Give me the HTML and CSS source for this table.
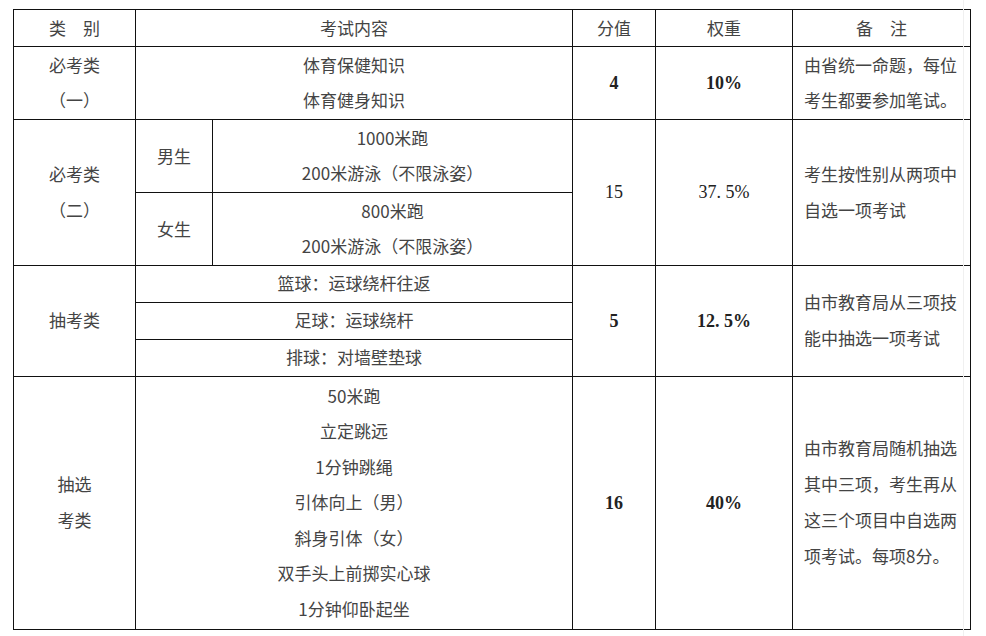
FILE: index.html
```html
<!DOCTYPE html>
<html lang="zh-CN">
<head>
<meta charset="utf-8">
<title>考试项目</title>
<link rel="stylesheet" href="styles.css">
</head>
<body>
<div class="page">
<table class="exam">
  <colgroup>
    <col class="c-cat">
    <col class="c-sex">
    <col class="c-item">
    <col class="c-score">
    <col class="c-weight">
    <col class="c-note">
  </colgroup>
  <tr class="r-head">
    <td>类　别</td>
    <td colspan="2">考试内容</td>
    <td>分值</td>
    <td>权重</td>
    <td>备　注</td>
  </tr>
  <tr class="r-1">
    <td>必考类<br>（一）</td>
    <td colspan="2">体育保健知识<br>体育健身知识</td>
    <td class="num b">4</td>
    <td class="num b">10%</td>
    <td class="note">由省统一命题，每位考生都要参加笔试。</td>
  </tr>
  <tr class="r-2">
    <td rowspan="2" class="span2">必考类<br>（二）</td>
    <td>男生</td>
    <td>1000米跑<br>200米游泳（不限泳姿）</td>
    <td rowspan="2" class="num">15</td>
    <td rowspan="2" class="num">37. 5%</td>
    <td rowspan="2" class="note">考生按性别从两项中自选一项考试</td>
  </tr>
  <tr class="r-2">
    <td>女生</td>
    <td>800米跑<br>200米游泳（不限泳姿）</td>
  </tr>
  <tr class="r-3">
    <td rowspan="3">抽考类</td>
    <td colspan="2">篮球：运球绕杆往返</td>
    <td rowspan="3" class="num b">5</td>
    <td rowspan="3" class="num b">12. 5%</td>
    <td rowspan="3" class="note">由市教育局从三项技能中抽选一项考试</td>
  </tr>
  <tr class="r-3">
    <td colspan="2">足球：运球绕杆</td>
  </tr>
  <tr class="r-3">
    <td colspan="2">排球：对墙壁垫球</td>
  </tr>
  <tr class="r-4">
    <td>抽选<br>考类</td>
    <td colspan="2" class="items">50米跑<br>立定跳远<br>1分钟跳绳<br>引体向上（男）<br>斜身引体（女）<br>双手头上前掷实心球<br>1分钟仰卧起坐</td>
    <td class="num b">16</td>
    <td class="num b">40%</td>
    <td class="note">由市教育局随机抽选其中三项，考生再从这三个项目中自选两项考试。每项8分。</td>
  </tr>
</table>
<div class="edge"></div>
</div>
</body>
</html>
```

FILE: styles.css
```css
html, body {
  margin: 0;
  padding: 0;
  background: #ffffff;
}

.page {
  position: relative;
  width: 986px;
  height: 636px;
  padding: 9px 0 0 13px;
  box-sizing: border-box;
}

.exam {
  border-collapse: collapse;
  table-layout: fixed;
  width: 957px;
  font-family: "Noto Sans CJK SC", "Noto Sans", sans-serif;
  font-size: 17px;
  color: #444;
}

.c-cat { width: 122px; }
.c-sex { width: 77px; }
.c-item { width: 360px; }
.c-score { width: 83px; }
.c-weight { width: 137px; }
.c-note { width: 178px; }

.exam td {
  border: 1px solid #111;
  padding: 0 0 2px 0;
  text-align: center;
  vertical-align: middle;
  line-height: 36px;
  white-space: normal;
}

.r-head { height: 37px; }
.r-1 { height: 73px; }
.r-2 { height: 73px; }
.r-3 { height: 37px; }
.r-4 { height: 253px; }

.r-head td { padding: 0; }
.r-1 td { line-height: 35px; }
.r-2 td { line-height: 35px; }
.r-2 td.span2 { line-height: 36px; }
.r-3 td { line-height: 34px; }
.r-4 td.items { line-height: 35.5px; }

.exam td.note {
  text-align: left;
  padding: 0 8px 2px 11px;
  line-height: 36px;
}

.r-1 td.note { line-height: 35px; }

.exam td.num {
  font-family: "Liberation Serif", "Times New Roman", serif;
  font-size: 18px;
  color: #222;
  padding: 0;
}

.exam td.b { font-weight: bold; }

.edge {
  position: absolute;
  left: 963px;
  top: 0;
  width: 1px;
  height: 636px;
  background: #f0f0f0;
}
```
